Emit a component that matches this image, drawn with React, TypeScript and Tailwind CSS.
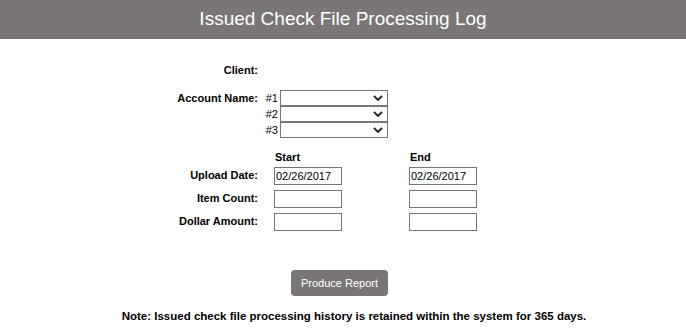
import React from "react";

const font = { fontFamily: '"Liberation Sans", Arial, sans-serif' };

function Chevron() {
  return (
    <svg width="10" height="6" viewBox="0 0 10 6" className="block">
      <path d="M1 1 L5 5 L9 1" fill="none" stroke="#222" strokeWidth="1.8" />
    </svg>
  );
}

function Select() {
  return (
    <div className="w-[108px] h-[16px] border border-[#767676] bg-white flex items-center justify-end pr-[4px]">
      <Chevron />
    </div>
  );
}

function Input({ value }: { value?: string }) {
  return (
    <div className="w-[68px] h-[18px] border border-[#767676] bg-white flex items-center pl-[1px] text-[11px] text-black leading-none">
      {value}
    </div>
  );
}

export default function App() {
  return (
    <div className="w-[686px] h-[332px] bg-white overflow-hidden" style={font}>
      <div className="h-[39px] bg-[#7b7676] flex items-center justify-center text-white text-[19px]">
        Issued Check File Processing Log
      </div>

      <div className="mt-[24px] flex text-[11px] font-bold text-black leading-[14px]">
        <div className="w-[258px] text-right">Client:</div>
      </div>

      <div className="mt-[13px] flex text-[11px] font-bold text-black">
        <div className="w-[258px] text-right leading-[16px]">Account Name:</div>
        <div className="flex flex-col">
          {["#1", "#2", "#3"].map((n) => (
            <div key={n} className="flex items-center h-[16px]">
              <div className="w-[22px] text-right pr-[2px] leading-[16px] font-normal">{n}</div>
              <Select />
            </div>
          ))}
        </div>
      </div>

      <div className="mt-[12px] flex text-[11px] font-bold text-black leading-[14px]">
        <div className="w-[275px]" />
        <div className="w-[135px]">Start</div>
        <div>End</div>
      </div>

      <div className="mt-[3px] flex flex-col gap-[5px] text-[11px] font-bold text-black">
        {[
          ["Upload Date:", "02/26/2017"],
          ["Item Count:", ""],
          ["Dollar Amount:", ""],
        ].map(([label, v]) => (
          <div key={label} className="flex items-center h-[18px]">
            <div className="w-[258px] text-right leading-[14px] -mt-[2px]">{label}</div>
            <div className="w-[16px]" />
            <div className="font-normal">
              <Input value={v} />
            </div>
            <div className="w-[67px]" />
            <div className="font-normal">
              <Input value={v} />
            </div>
          </div>
        ))}
      </div>

      <div className="mt-[39px] flex justify-center pr-[7px]">
        <div className="w-[97px] h-[26px] rounded-[4px] bg-[#7b7676] text-white text-[11px] flex items-center justify-center">
          Produce Report
        </div>
      </div>

      <div className="mt-[13px] flex justify-center pl-[22px] text-[11.5px] font-bold text-black leading-[14px]">
        Note: Issued check file processing history is retained within the system for 365 days.
      </div>
    </div>
  );
}
